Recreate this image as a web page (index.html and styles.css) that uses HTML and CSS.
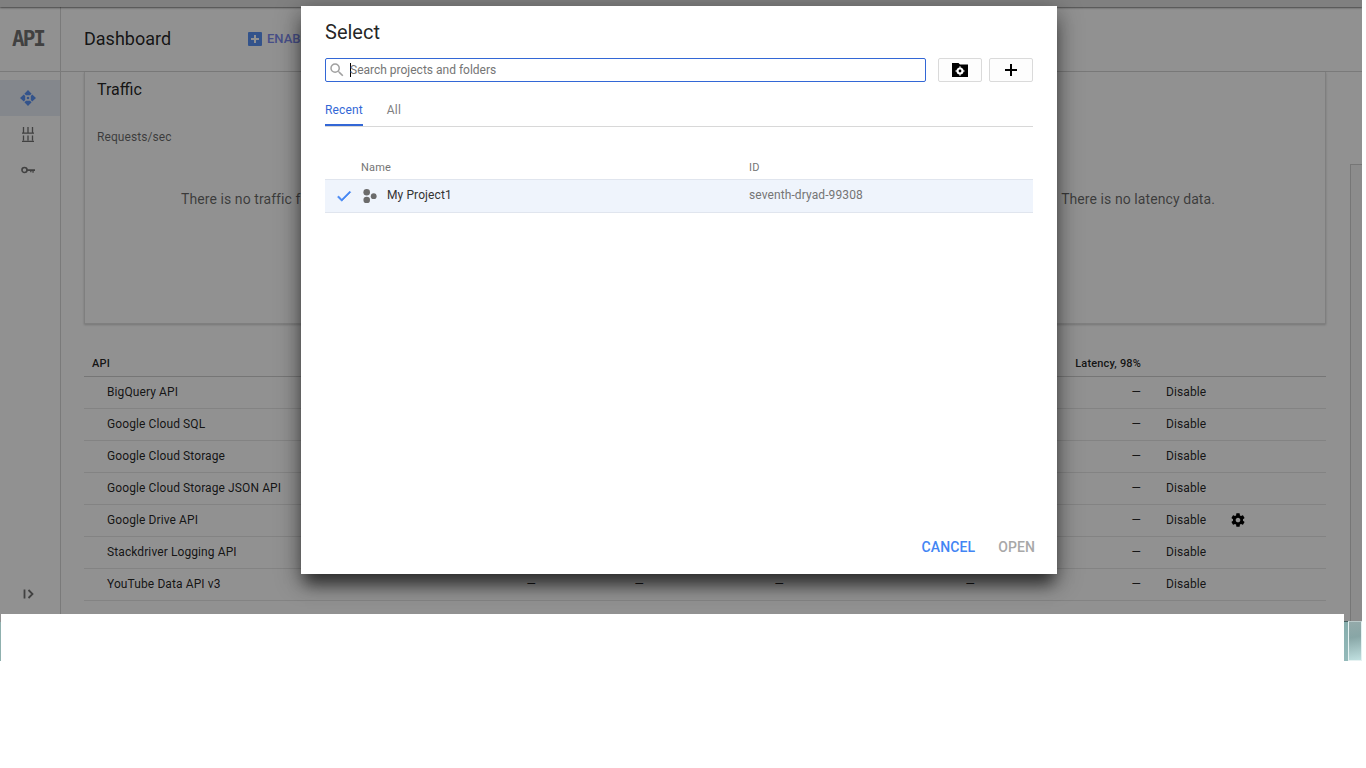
FILE: index.html
```html
<!DOCTYPE html>
<html lang="en">
<head>
<meta charset="utf-8">
<title>Dashboard</title>
<link rel="stylesheet" href="styles.css">
</head>
<body>
<div class="page">
  <div class="app">
    <div class="topstrip"></div>
    <div class="main">
      <aside class="sidebar">
        <div class="logo">API</div>
        <nav class="nav">
          <div class="nav-item active">
            <svg class="nav-icon" viewBox="0 0 16 16"><path class="blue" d="M8 0l3.600 3.800-1.600 1.400H6L4.400 3.800zM8 16l-3.600-3.800 1.600-1.400h4l1.600 1.400zM0 8l3.800-3.600 1.400 1.600v4l-1.400 1.600zM16 8l-3.800 3.600-1.400-1.600V6l1.400-1.600z"/><circle class="blue" cx="8" cy="8" r="1.300"/></svg>
          </div>
          <div class="nav-item">
            <svg class="nav-lib" viewBox="0 0 12 15"><path class="line" d="M1.500 0v5.500M6 0v5.500M10.500 0v5.500M1.500 8.500v5M6 8.500v5M10.500 8.500v5M0 6.200h12M0 14.300h12"/></svg>
          </div>
          <div class="nav-item">
            <svg class="nav-key" viewBox="0 0 16 16"><circle class="ring" cx="4" cy="8" r="2.900"/><path class="fillgray" d="M6.500 7h9.500v2.200h-1.500v1.800H13V9.200h-1v1.300h-1.500V9.200H6.500z"/></svg>
          </div>
        </nav>
        <div class="collapse">
          <svg class="collapse-icon" viewBox="0 0 12 12"><path class="line2" d="M1.500 1.500v9M5.500 2l4 4-4 4"/></svg>
        </div>
      </aside>
      <div class="workspace">
        <header class="header">
          <h1 class="title">Dashboard</h1>
          <div class="enable">
            <svg class="enable-icon" viewBox="0 0 14 14"><rect class="blue" width="14" height="14" rx="1"/><path class="white" d="M6 3h2v3h3v2H8v3H6V8H3V6h3z"/></svg>
            <span>ENABLE APIS AND SERVICES</span>
          </div>
        </header>
        <div class="body">
          <main class="scroll">
            <section class="card">
              <h2 class="card-title">Traffic</h2>
              <div class="card-sub">Requests/sec</div>
              <div class="messages">
                <span>There is no traffic for this time period.</span>
                <span>There is no latency data.</span>
              </div>
            </section>
            <div class="table">
              <div class="row head"><span class="name">API</span><span></span><span></span><span></span><span></span><span class="num">Latency, 98%</span><span></span><span></span></div>
              <div class="row"><span class="name">BigQuery API</span><span class="num">—</span><span class="num">—</span><span class="num">—</span><span class="num">—</span><span class="num">—</span><span class="act">Disable</span><span></span></div>
              <div class="row"><span class="name">Google Cloud SQL</span><span class="num">—</span><span class="num">—</span><span class="num">—</span><span class="num">—</span><span class="num">—</span><span class="act">Disable</span><span></span></div>
              <div class="row"><span class="name">Google Cloud Storage</span><span class="num">—</span><span class="num">—</span><span class="num">—</span><span class="num">—</span><span class="num">—</span><span class="act">Disable</span><span></span></div>
              <div class="row"><span class="name">Google Cloud Storage JSON API</span><span class="num">—</span><span class="num">—</span><span class="num">—</span><span class="num">—</span><span class="num">—</span><span class="act">Disable</span><span></span></div>
              <div class="row"><span class="name">Google Drive API</span><span class="num">—</span><span class="num">—</span><span class="num">—</span><span class="num">—</span><span class="num">—</span><span class="act">Disable</span><span class="gear-cell"><svg class="gear" viewBox="0 0 24 24"><path d="M19.430 12.980c.04-.32.07-.64.07-.98s-.03-.66-.07-.98l2.110-1.650c.19-.15.240-.42.120-.64l-2-3.460c-.12-.22-.39-.3-.61-.22l-2.490 1c-.52-.4-1.080-.73-1.690-.98l-.38-2.650A.488.488 0 0 0 14 2h-4c-.25 0-.46.18-.49.42l-.38 2.650c-.61.25-1.170.59-1.690.98l-2.490-1c-.23-.09-.49 0-.61.22l-2 3.460c-.13.22-.07.49.12.64l2.110 1.650c-.04.32-.07.65-.07.98s.03.66.07.98l-2.110 1.650c-.19.15-.24.42-.12.64l2 3.460c.12.22.39.3.61.22l2.490-1c.52.4 1.080.73 1.690.98l.38 2.650c.03.24.24.42.49.42h4c.25 0 .46-.18.49-.42l.38-2.650c.61-.25 1.170-.59 1.690-.98l2.490 1c.23.09.49 0 .61-.22l2-3.460c.12-.22.07-.49-.12-.64l-2.110-1.650zM12 15.500c-1.930 0-3.500-1.570-3.500-3.500s1.570-3.500 3.500-3.500 3.500 1.570 3.500 3.500-1.570 3.500-3.500 3.500z"/></svg></span></div>
              <div class="row"><span class="name">Stackdriver Logging API</span><span class="num">—</span><span class="num">—</span><span class="num">—</span><span class="num">—</span><span class="num">—</span><span class="act">Disable</span><span></span></div>
              <div class="row"><span class="name">YouTube Data API v3</span><span class="num">—</span><span class="num">—</span><span class="num">—</span><span class="num">—</span><span class="num">—</span><span class="act">Disable</span><span></span></div>
            </div>
          </main>
          <div class="scrollbar"></div>
        </div>
      </div>
    </div>
  </div>
  <div class="scrim"></div>
  <div class="dialog">
    <h2 class="dialog-title">Select</h2>
    <div class="search-row">
      <div class="search">
        <svg class="search-icon" viewBox="0 0 24 24"><path d="M15.500 14h-.79l-.28-.27A6.470 6.470 0 0 0 16 9.500 6.500 6.500 0 1 0 9.500 16c1.610 0 3.090-.59 4.230-1.570l.27.28v.79l5 4.990L20.490 19l-4.990-5zm-6 0C7.010 14 5 11.990 5 9.500S7.010 5 9.500 5 14 7.010 14 9.500 11.990 14 9.500 14z"/></svg>
        <span class="caret"></span>
        <span class="placeholder">Search projects and folders</span>
      </div>
      <div class="btn">
        <svg class="btn-folder" viewBox="0 0 16 16"><path d="M0 1h6.500L8 2.500h8V15H0z"/><circle class="gear-hole" cx="8" cy="9" r="3.500"/><circle cx="8" cy="9" r="1.400"/><path class="gear-teeth" d="M7.200 4.600h1.600v1.200H7.200zM7.200 12.200h1.600v1.200H7.200zM3.600 8.200h1.200v1.600H3.600zM11.200 8.200h1.200v1.600h-1.200z"/></svg>
      </div>
      <div class="btn">
        <svg class="btn-plus" viewBox="0 0 14 14"><path d="M6 1h2v5h5v2H8v5H6V8H1V6h5z"/></svg>
      </div>
    </div>
    <div class="tabs">
      <span class="tab current">Recent</span>
      <span class="tab">All</span>
    </div>
    <div class="list-head">
      <span class="col-name">Name</span>
      <span class="col-id">ID</span>
    </div>
    <div class="list-row">
      <svg class="check" viewBox="0 0 24 24"><path d="M9 16.200 4.800 12l-1.400 1.400L9 19 21 7l-1.400-1.400z"/></svg>
      <svg class="project" viewBox="0 0 14 14"><circle cx="3.700" cy="3.300" r="3.300"/><circle cx="3.700" cy="11" r="3.300"/><circle cx="10.700" cy="7.200" r="2.900"/></svg>
      <span class="project-name">My Project1</span>
      <span class="project-id">seventh-dryad-99308</span>
    </div>
    <div class="actions">
      <span class="action primary">CANCEL</span>
      <span class="action disabled">OPEN</span>
    </div>
  </div>
  <div class="bottom">
    <div class="edge"></div>
    <div class="blank"></div>
    <div class="thumb-left"></div>
    <div class="thumb"></div>
  </div>
</div>
</body>
</html>
```
FILE: styles.css
```css
* { box-sizing: border-box; }
html, body { margin: 0; padding: 0; background: #fff; }
body { font-family: Roboto, "Liberation Sans", sans-serif; color: rgba(0,0,0,.87); overflow: hidden; }
h1, h2 { margin: 0; font-weight: 400; }

.page { position: relative; width: 1362px; height: 661px; overflow: hidden; background: #fff; }
.app { height: 622px; display: flex; flex-direction: column; background: #fff; }
.topstrip { height: 7px; flex: none; background: #e1e1e1; box-shadow: 0 1px 2px rgba(0,0,0,.5); position: relative; }
.main { flex: 1; display: flex; min-height: 0; }

.sidebar { width: 61px; flex: none; border-right: 1px solid #d6d6d6; display: flex; flex-direction: column; }
.logo { height: 65px; flex: none; border-bottom: 1px solid #d6d6d6; display: flex; align-items: center; justify-content: center; font-family: "DejaVu Sans Mono", monospace; font-weight: 700; font-size: 21px; letter-spacing: -2px; color: #727272; padding: 0 4px 0 0; }
.nav { padding-top: 8px; display: flex; flex-direction: column; flex: 1; }
.nav-item { height: 36px; display: flex; align-items: center; justify-content: center; padding-right: 4px; }
.nav-item.active { background: #e8edf6; }
.nav-icon { width: 16px; height: 16px; display: block; }
.nav-key { width: 14px; height: 14px; display: block; }
.nav-lib { width: 12px; height: 15px; display: block; }
.blue { fill: #5a93f5; }
.white { fill: #fff; }
.line { fill: none; stroke: #727272; stroke-width: 1.300; }
.line2 { fill: none; stroke: #727272; stroke-width: 1.800; }
.ring { fill: none; stroke: #727272; stroke-width: 1.800; }
.fillgray { fill: #727272; }
.collapse { height: 38px; flex: none; display: flex; justify-content: center; padding: 4px 3px 0 0; }
.collapse-icon { width: 12px; height: 12px; }

.workspace { flex: 1; min-width: 0; display: flex; flex-direction: column; }
.header { height: 65px; flex: none; border-bottom: 1px solid #d6d6d6; display: flex; align-items: center; padding: 0 0 1px 23px; }
.title { font-size: 18px; line-height: 24px; width: 164px; }
.enable { display: flex; align-items: center; gap: 5px; font-size: 13px; font-weight: 500; color: #7e8bef; white-space: nowrap; }
.enable-icon { width: 14px; height: 14px; }

.body { flex: 1; min-height: 0; display: flex; }
.scroll { flex: 1; min-width: 0; padding: 0 24px 0 23px; }
.scrollbar { width: 12px; flex: none; margin-top: 92px; background: #f6f6f6; border-left: 1px solid #d0d0d0; border-top: 1px solid #d0d0d0; }

.card { height: 252px; border: 1px solid #e0e0e0; border-top: 0; box-shadow: 0 1px 2px rgba(0,0,0,.2); padding: 7px 12px 0 12px; }
.card-title { font-size: 16px; line-height: 22px; }
.card-sub { margin-top: 28px; font-size: 12px; line-height: 16px; letter-spacing: .08px; color: rgba(0,0,0,.6); }
.messages { margin-top: 44px; padding: 0 98px 0 84px; display: flex; justify-content: space-between; font-size: 14px; line-height: 20px; letter-spacing: .08px; color: rgba(0,0,0,.6); white-space: nowrap; }

.table { margin-top: 31px; font-size: 12px; letter-spacing: .1px; }
.row { height: 32px; display: grid; grid-template-columns: 301px 151px 108px 140px 191px 166px 89px 1fr; align-items: center; border-bottom: 1px solid #e6e6e6; padding-bottom: 2px; }
.row.head { height: 22px; font-size: 11px; font-weight: 500; border-bottom-color: #d0d0d0; letter-spacing: .17px; padding-bottom: 5px; }
.name { padding-left: 23px; white-space: nowrap; }
.head .name { padding-left: 8px; }
.num { text-align: right; white-space: nowrap; }
.act { padding-left: 25px; }
.gear-cell { display: flex; align-items: center; }
.gear { width: 16px; height: 16px; display: block; }

.scrim { position: absolute; inset: 0; background: rgba(0,0,0,.43); }

.dialog { position: absolute; left: 301px; top: 6px; width: 756px; height: 568px; background: #fff; padding: 0 24px; display: flex; flex-direction: column; box-shadow: 0 14px 15px -4px rgba(0,0,0,.55), 0 6px 22px 2px rgba(0,0,0,.35); }
.dialog-title { height: 52px; flex: none; font-size: 20px; line-height: 52px; }
.search-row { display: flex; height: 24px; flex: none; }
.search { width: 601px; margin-right: 12px; border: 1px solid #3367d6; border-radius: 2px; display: flex; align-items: center; padding-left: 2px; position: relative; }
.search-icon { width: 18px; height: 18px; fill: #a0a0a0; flex: none; }
.caret { width: 1px; height: 14px; background: #000; margin-left: 4px; flex: none; }
.placeholder { font-size: 12px; color: #757575; white-space: nowrap; margin-left: -1px; }
.btn { width: 44px; height: 24px; border: 1px solid #dadada; border-radius: 2px; background: #fdfdfd; display: flex; align-items: center; justify-content: center; margin-right: 7px; flex: none; }
.btn:last-child { margin-right: 0; }
.btn-folder { width: 16px; height: 16px; fill: #000; }
.gear-hole { fill: #fff; }
.gear-teeth { fill: #fff; }
.btn-plus { width: 14px; height: 14px; fill: #000; }

.tabs { height: 45px; flex: none; display: flex; gap: 24px; border-bottom: 1px solid #d8d8d8; }
.tab { font-size: 12px; letter-spacing: .15px; line-height: 20px; padding-top: 18px; height: 44px; color: #808080; }
.tab.current { color: #3367d6; border-bottom: 2px solid #3367d6; }

.list-head { height: 52px; flex: none; display: flex; align-items: flex-end; font-size: 11px; letter-spacing: .2px; color: #757575; padding-bottom: 4px; line-height: 14px; }
.col-name { margin-left: 36px; width: 388px; }
.list-row { height: 34px; flex: none; background: #eff4fc; border-top: 1px solid #e0e5ee; border-bottom: 1px solid #e0e5ee; display: flex; align-items: center; font-size: 12px; letter-spacing: .1px; }
.check { width: 18px; height: 18px; fill: #4285f4; stroke: #4285f4; stroke-width: .8; margin-left: 10px; flex: none; }
.project { width: 14px; height: 14px; fill: #6b6b6b; margin-left: 10px; flex: none; }
.project-name { margin-left: 10px; width: 362px; color: #333; white-space: nowrap; padding-bottom: 2px; }
.project-id { color: #757575; white-space: nowrap; padding-bottom: 2px; }

.actions { margin-top: auto; height: 54px; flex: none; display: flex; justify-content: flex-end; gap: 23px; font-size: 14px; font-weight: 500; letter-spacing: .1px; margin-right: -2px; padding-top: 17px; }
.action { line-height: 20px; }
.primary { color: #4285f4; }
.disabled { color: #a8a8a8; }

.bottom { position: absolute; left: 0; right: 0; top: 614px; height: 47px; display: flex; align-items: flex-end; }
.edge { width: 1px; height: 39px; flex: none; background: #8fb0ae; }
.blank { width: 1343px; height: 47px; flex: none; background: #fff; }
.thumb-left { width: 4px; height: 40px; flex: none; background: linear-gradient(180deg, #46605f 0, #46605f 1px, #86adac 1px, #94baba 100%); }
.thumb { width: 14px; height: 40px; flex: none; border: 1px solid #e6f2f2; border-top-color: #b9c9c9; background: linear-gradient(170deg, #94aaaa 0%, #88a6a6 40%, #c0e0e0 100%); }
```
